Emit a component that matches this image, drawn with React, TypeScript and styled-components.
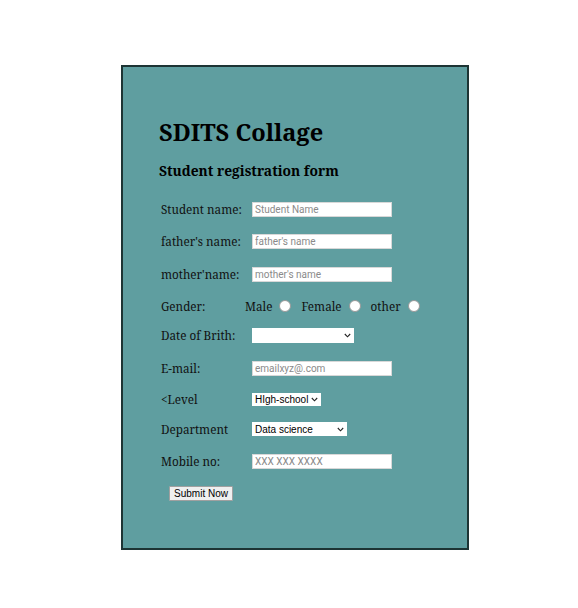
import React from "react";
import styled, { createGlobalStyle } from "styled-components";

const Global = createGlobalStyle`
  body { margin: 8px; background: #fff; font-family: "Noto Serif", "DejaVu Serif", serif; }
`;

const Card = styled.div`
  box-sizing: border-box;
  width: 348px;
  height: 485px;
  margin: 57px 0 0 113px;
  background: #5f9ea0;
  border: 2px solid #1d3434;
  padding: 50px 0 0 36px;
`;

const Title = styled.h1`
  margin: 0;
  font-size: 23.6px;
  font-weight: bold;
  line-height: 30px;
  color: #000;
`;

const Subtitle = styled.h3`
  margin: 14px 0 0;
  font-size: 13.8px;
  font-weight: bold;
  line-height: 20px;
  color: #000;
`;

const Form = styled.div`
  margin-top: 20px;
  margin-left: 2px;
  display: flex;
  flex-direction: column;
`;

const Row = styled.div<{ $gap: number }>`
  display: grid;
  grid-template-columns: 91px 1fr;
  align-items: center;
  justify-items: start;
  height: 16px;
  margin-top: ${(p) => p.$gap}px;
`;

const Label = styled.span`
  font-size: 11.7px;
  line-height: 16px;
  color: #111;
  white-space: nowrap;
`;

const TextInput = styled.input`
  display: block;
  box-sizing: border-box;
  width: 140px;
  height: 15px;
  border: 1px solid #d8d8d8;
  border-radius: 0;
  padding: 0 2px;
  font-family: Roboto, "Liberation Sans", sans-serif;
  font-size: 10px;
  background: #fff;
  outline: none;
  &::placeholder { color: #8a8a8a; }
`;

const SelectWrap = styled.span<{ $w: number; $h: number }>`
  position: relative;
  display: block;
  width: ${(p) => p.$w}px;
  height: ${(p) => p.$h}px;
  line-height: 0;
`;

const Select = styled.select`
  display: block;
  appearance: none;
  -webkit-appearance: none;
  box-sizing: border-box;
  width: 100%;
  height: 100%;
  font-family: "Liberation Sans", Arial, sans-serif;
  font-size: 10px;
  line-height: normal;
  border: none;
  border-radius: 0;
  padding: 0 0 0 3px;
  margin: 0;
  background: #fff;
  color: #000;
  outline: none;
`;

const Chevron = styled.svg`
  position: absolute;
  right: 3px;
  top: 50%;
  width: 7px;
  height: 5px;
  margin-top: -2px;
  pointer-events: none;
`;

const GenderRow = styled.div`
  display: flex;
  align-items: center;
  margin-left: -7px;
  font-size: 11.7px;
`;

const Opt = styled.label`
  display: flex;
  align-items: center;
  margin-right: 10px;
  color: #111;
`;

const Radio = styled.span`
  display: inline-block;
  box-sizing: border-box;
  width: 12px;
  height: 12px;
  margin-left: 7px;
  border-radius: 50%;
  background: #fff;
  border: 1px solid #9a9a9a;
`;

const Submit = styled.button`
  box-sizing: border-box;
  margin: 17px 0 0 8px;
  align-self: flex-start;
  font-family: "Liberation Sans", Arial, sans-serif;
  font-size: 10px;
  width: 64px;
  height: 15px;
  padding: 0;
  background: #efefef;
  border: 1px solid #a0a0a0;
  border-radius: 1px;
  color: #000;
`;

function DropDown({ w, h, value }: { w: number; h: number; value: string }) {
  return (
    <SelectWrap $w={w} $h={h}>
      <Select defaultValue={value}>
        <option value={value}>{value}</option>
      </Select>
      <Chevron viewBox="0 0 7 5">
        <path d="M0.8 1 L3.5 3.8 L6.2 1" fill="none" stroke="#222" strokeWidth="1.1" />
      </Chevron>
    </SelectWrap>
  );
}

export default function App() {
  return (
    <>
      <Global />
      <Card>
        <Title>SDITS Collage</Title>
        <Subtitle>Student registration form</Subtitle>
        <Form>
          <Row $gap={0}>
            <Label>Student name:</Label>
            <TextInput placeholder="Student Name" />
          </Row>
          <Row $gap={16}>
            <Label>father's name:</Label>
            <TextInput placeholder="father's name" />
          </Row>
          <Row $gap={17}>
            <Label>mother'name:</Label>
            <TextInput placeholder="mother's name" />
          </Row>
          <Row $gap={16}>
            <Label>Gender:</Label>
            <GenderRow>
              <Opt>Male<Radio /></Opt>
              <Opt>Female<Radio /></Opt>
              <Opt>other<Radio /></Opt>
            </GenderRow>
          </Row>
          <Row $gap={13}>
            <Label>Date of Brith:</Label>
            <DropDown w={102} h={15} value="" />
          </Row>
          <Row $gap={17}>
            <Label>E-mail:</Label>
            <TextInput placeholder="emailxyz@.com" />
          </Row>
          <Row $gap={15}>
            <Label>&lt;Level</Label>
            <DropDown w={69} h={13} value="HIgh-school" />
          </Row>
          <Row $gap={14}>
            <Label>Department</Label>
            <DropDown w={95} h={14} value="Data science" />
          </Row>
          <Row $gap={16}>
            <Label>Mobile no:</Label>
            <TextInput placeholder="XXX XXX XXXX" />
          </Row>
          <Submit>Submit Now</Submit>
        </Form>
      </Card>
    </>
  );
}
